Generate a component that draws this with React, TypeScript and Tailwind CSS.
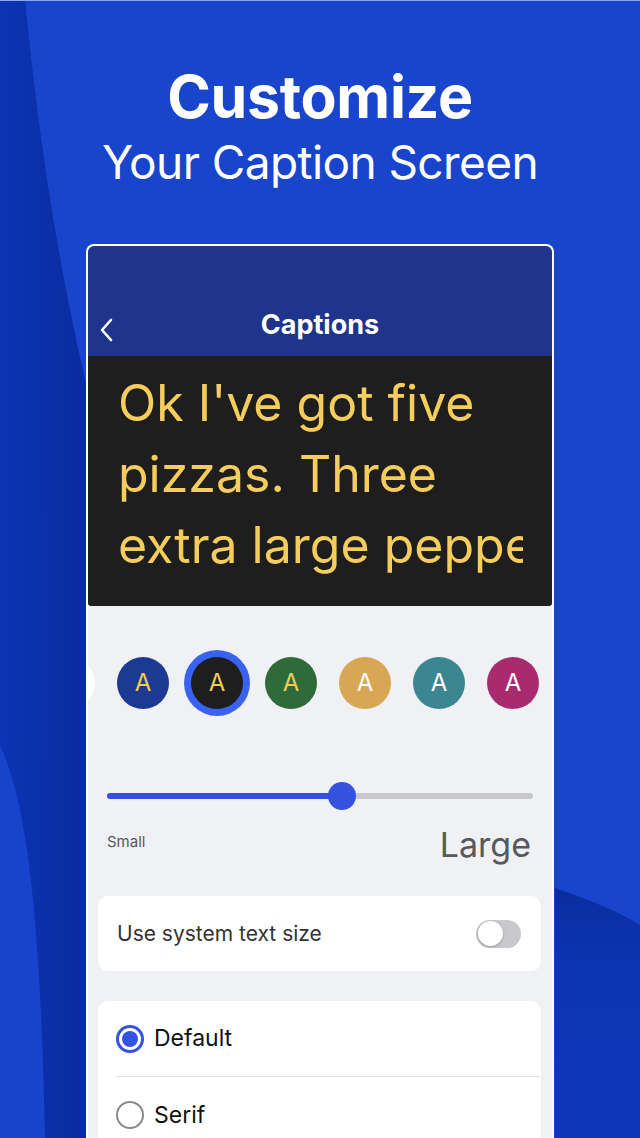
import React from "react";

const swatches = [
  { bg: "bg-[#1c3a92]", fg: "text-[#f2cb55]" },
  { bg: "bg-[#1e1e1e]", fg: "text-[#f2cb55]", selected: true },
  { bg: "bg-[#2f6a3b]", fg: "text-[#f2cb55]" },
  { bg: "bg-[#d7a756]", fg: "text-white" },
  { bg: "bg-[#3a8791]", fg: "text-white" },
  { bg: "bg-[#a82a6f]", fg: "text-white" },
];

const Backdrop = () => (
  <svg className="absolute inset-0" width="640" height="1138" viewBox="0 0 640 1138">
    <defs>
      <linearGradient id="leftDark" x1="0" y1="0" x2="1" y2="0">
        <stop offset="0" stopColor="#0c34b4" />
        <stop offset="1" stopColor="#082996" />
      </linearGradient>
      <linearGradient id="rightDark" x1="0" y1="0" x2="0" y2="1">
        <stop offset="0" stopColor="#0a2c9e" />
        <stop offset="0.3" stopColor="#0c35b3" />
        <stop offset="1" stopColor="#0d37b8" />
      </linearGradient>
    </defs>
    <rect width="640" height="1138" fill="#1944cc" />
    <path d="M0 0 L25 0 C40 150 60 280 95 420 L120 1138 L0 1138 Z" fill="url(#leftDark)" />
    <path d="M0 745 C25 800 40 900 45 1138 L0 1138 Z" fill="#1843cc" />
    <path d="M555 888 C590 900 615 910 640 925 L640 1138 L555 1138 Z" fill="url(#rightDark)" />
    <rect width="640" height="1" fill="#8fa6ee" />
  </svg>
);

const Toggle = () => (
  <div className="w-[45px] h-[28px] rounded-full bg-[#c9c9cd] p-[1.5px] flex items-center">
    <div className="w-[25px] h-[25px] rounded-full bg-white shadow-[0_1px_3px_rgba(0,0,0,0.25)]" />
  </div>
);

const Radio = ({ on }: { on?: boolean }) =>
  on ? (
    <div className="w-[28px] h-[28px] rounded-full border-[3px] border-[#3552e0] flex items-center justify-center">
      <div className="w-[16px] h-[16px] rounded-full bg-[#3552e0]" />
    </div>
  ) : (
    <div className="w-[28px] h-[28px] rounded-full border-[2.5px] border-[#8a8a8e]" />
  );

export default function App() {
  return (
    <div className="relative w-[640px] h-[1138px] overflow-hidden font-['Inter',sans-serif]">
      <Backdrop />
      <div className="relative flex flex-col items-center">
        <h1 className="mt-[65px] text-[59px] leading-[64px] font-bold text-white tracking-[-0.3px]">Customize</h1>
        <p className="mt-[5px] text-[46px] leading-[56px] text-white tracking-[-0.6px]">Your Caption Screen</p>

        <div className="mt-[54px] w-[468px] h-[900px] border-2 border-b-0 border-white rounded-t-[8px] overflow-hidden bg-[#eff1f5]">
          {/* nav bar */}
          <div className="h-[110px] bg-[#1f358c] relative flex items-end justify-center pb-[11px]">
            <svg className="absolute left-[11px] bottom-[14px]" width="14" height="24" viewBox="0 0 14 24">
              <path d="M12 2 L3 12 L12 22" fill="none" stroke="white" strokeWidth="2.6" strokeLinecap="round" strokeLinejoin="round" />
            </svg>
            <span className="text-[27px] font-bold text-white">Captions</span>
          </div>

          {/* caption preview */}
          <div className="h-[250px] bg-[#1e1e1e] rounded-b-[3px] pt-[12px] pl-[30px] pr-[29px]">
            <div className="overflow-hidden text-[#f4cd5c] text-[50px] leading-[71px] whitespace-nowrap">
              <div>Ok I've got five</div>
              <div>pizzas. Three</div>
              <div>extra large peppe</div>
            </div>
          </div>

          {/* colour swatches */}
          <div className="mt-[44px] h-[66px] flex items-center gap-[22px] overflow-hidden">
            <div className="shrink-0 w-[52px] h-[52px] rounded-full bg-white -ml-[45px]" />
            {swatches.map((s, i) =>
              s.selected ? (
                <div key={i} className="shrink-0 w-[66px] h-[66px] -mx-[7px] rounded-full bg-[#3a62f0] flex items-center justify-center">
                  <div className={`w-[52px] h-[52px] rounded-full ${s.bg} ${s.fg} flex items-center justify-center text-[24px]`}>A</div>
                </div>
              ) : (
                <div key={i} className={`shrink-0 w-[52px] h-[52px] rounded-full ${s.bg} ${s.fg} flex items-center justify-center text-[24px]`}>A</div>
              )
            )}
          </div>

          {/* slider */}
          <div className="mt-[66px] px-[19px]">
            <div className="relative h-[28px] flex items-center">
              <div className="w-full h-[6px] rounded-full bg-[#c8c8cc] flex">
                <div className="w-[235px] h-full rounded-full bg-[#3551e0]" />
              </div>
              <div className="absolute left-[221px] top-0 w-[28px] h-[28px] rounded-full bg-[#3551e0]" />
            </div>
            <div className="mt-[7px] flex items-center justify-between text-[#58585c]">
              <span className="text-[15px] mt-[-2px]">Small</span>
              <span className="text-[34px] mr-[2px] mt-[2px]">Large</span>
            </div>
          </div>

          {/* system text size */}
          <div className="mt-[26px] mx-[10px] mr-[11px] h-[75px] bg-white rounded-[10px] flex items-center justify-between pl-[19px] pr-[20px]">
            <span className="text-[21px] text-[#333336]">Use system text size</span>
            <Toggle />
          </div>

          {/* font family */}
          <div className="mt-[30px] mx-[10px] mr-[11px] bg-white rounded-[10px] pl-[18px]">
            <div className="h-[76px] flex items-center gap-[10px] border-b border-[#e4e4e8]">
              <Radio on />
              <span className="text-[23px] text-[#111]">Default</span>
            </div>
            <div className="h-[76px] flex items-center gap-[10px]">
              <Radio />
              <span className="text-[23px] text-[#111]">Serif</span>
            </div>
          </div>
        </div>
      </div>
    </div>
  );
}
